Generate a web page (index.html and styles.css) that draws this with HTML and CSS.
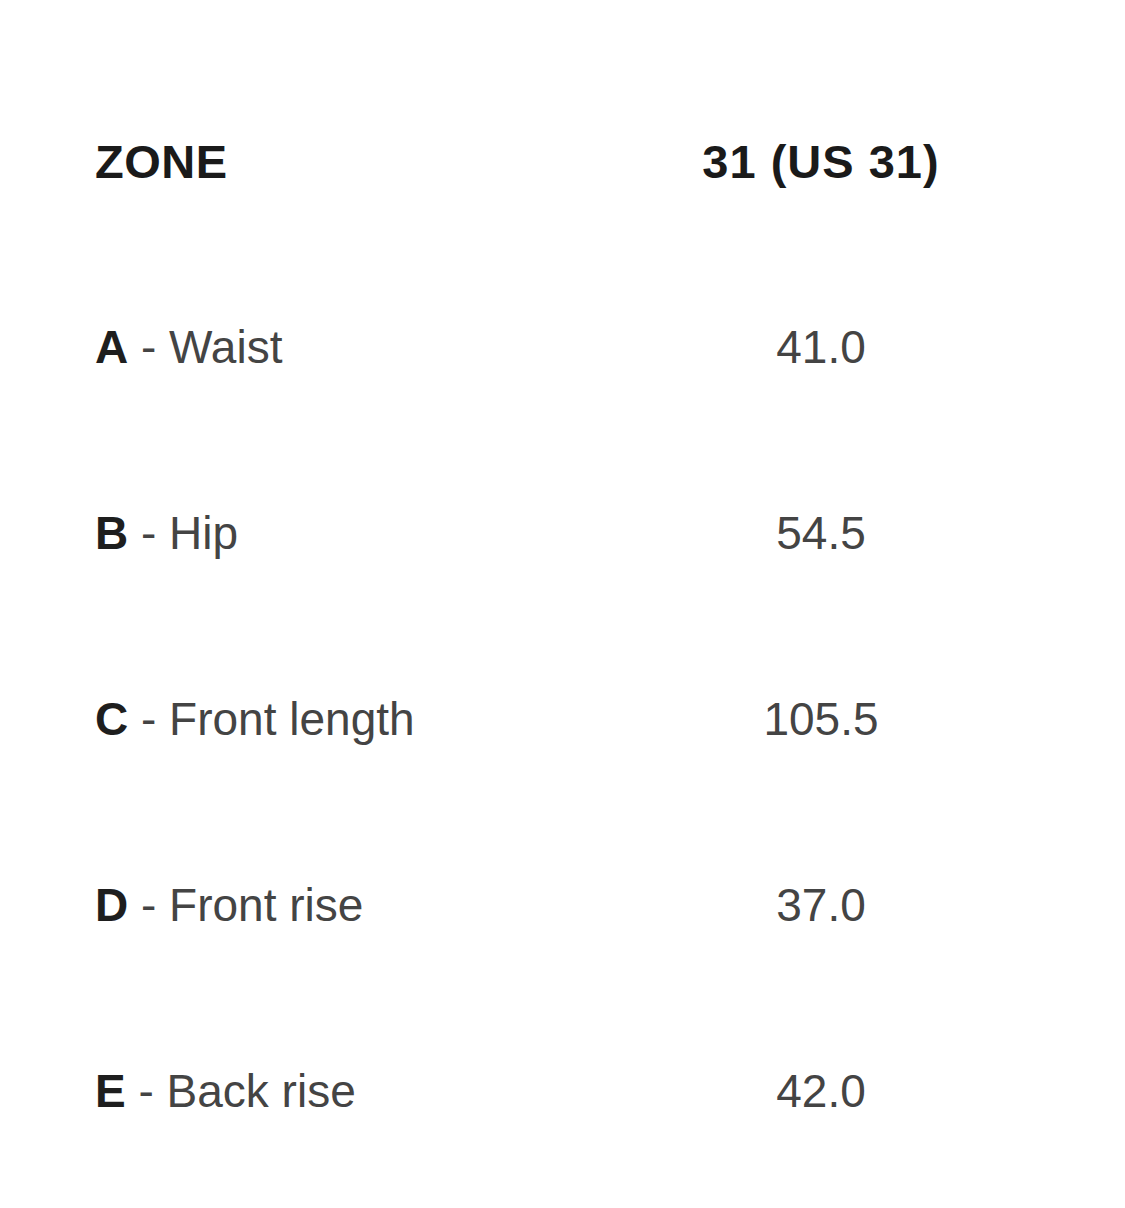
FILE: index.html
```html
<!DOCTYPE html>
<html>
<head>
<meta charset="utf-8">
<link rel="stylesheet" href="styles.css">
</head>
<body>
<div class="table">
  <div class="row head">
    <div class="zone">ZONE</div>
    <div class="val">31 (US 31)</div>
  </div>
  <div class="row">
    <div class="zone"><b>A</b> - Waist</div>
    <div class="val">41.0</div>
  </div>
  <div class="row">
    <div class="zone"><b>B</b> - Hip</div>
    <div class="val">54.5</div>
  </div>
  <div class="row">
    <div class="zone"><b>C</b> - Front length</div>
    <div class="val">105.5</div>
  </div>
  <div class="row">
    <div class="zone"><b>D</b> - Front rise</div>
    <div class="val">37.0</div>
  </div>
  <div class="row">
    <div class="zone"><b>E</b> - Back rise</div>
    <div class="val">42.0</div>
  </div>
</div>
</body>
</html>
```
FILE: styles.css
```css
html, body {
  margin: 0;
  padding: 0;
  background: #fff;
}
body {
  font-family: "Liberation Sans", Arial, sans-serif;
  width: 1125px;
  height: 1208px;
  overflow: hidden;
}
.table {
  padding: 68px 0 0 95px;
  display: flex;
  flex-direction: column;
}
.row {
  display: grid;
  grid-template-columns: 500px 452px;
  height: 186px;
  align-items: center;
  font-size: 46px;
  color: #444;
}
.row b {
  color: #1e1e1e;
  font-weight: 700;
}
.val {
  text-align: center;
}
.head {
  font-weight: 700;
  color: #1a1a1a;
  font-size: 47px;
}
.head .zone {
  letter-spacing: 0.5px;
}
.head .val {
  letter-spacing: 1px;
}
```
